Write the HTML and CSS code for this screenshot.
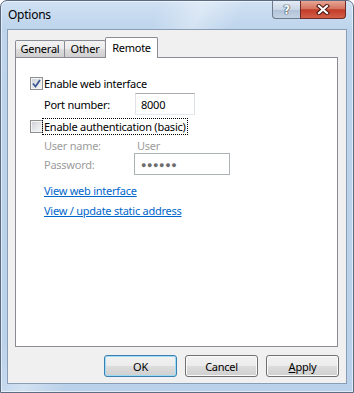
FILE: index.html
```html
<!DOCTYPE html>
<html lang="en">
<head>
  <meta charset="UTF-8" />
  <title>Options</title>
  <link rel="stylesheet" href="styles.css">
</head>
<body>
  <div class="window">
    <div class="titlebar">
      <span class="title">Options</span>
      <div class="caption-btns">
        <div class="cap help"><span>?</span></div>
        <div class="cap close">
          <svg width="14" height="11" viewBox="0 0 14 11">
            <path d="M3 2 L11 9 M11 2 L3 9" stroke="#4a1410" stroke-width="4.2" stroke-linecap="square" fill="none"/>
            <path d="M3 2 L11 9 M11 2 L3 9" stroke="#ffffff" stroke-width="2.2" stroke-linecap="square" fill="none"/>
          </svg>
        </div>
      </div>
    </div>

    <div class="client">
      <div class="tabs">
        <div class="tab general">General</div>
        <div class="tab other">Other</div>
        <div class="tab active">Remote</div>
      </div>

      <div class="panel">
        <div class="check-row">
          <span class="check">
            <svg width="9" height="9" viewBox="0 0 9 9">
              <path d="M1 4.5 L3.5 7.5 L8 1" stroke="#3e5a94" stroke-width="1.8" fill="none"/>
            </svg>
          </span>
          <span>Enable web interface</span>
        </div>
        <div class="field-row port-row">
          <span class="lbl">Port number:</span>
          <span class="textbox port-box">8000</span>
        </div>
        <div class="check-row auth-row">
          <span class="check"></span>
          <span class="focus">Enable authentication (basic)</span>
        </div>
        <div class="field-row user-row disabled">
          <span class="lbl">User name:</span>
          <span class="val">User</span>
        </div>
        <div class="field-row disabled">
          <span class="lbl">Password:</span>
          <span class="textbox pass-box">●●●●●●</span>
        </div>
        <a class="link first">View web interface</a>
        <a class="link">View / update static address</a>
      </div>

      <div class="buttons">
        <div class="btn default">OK</div>
        <div class="btn">Cancel</div>
        <div class="btn"><u>A</u>pply</div>
      </div>
    </div>
  </div>
</body>
</html>
```

FILE: styles.css
```css
body {
  margin: 0;
  font-family: "Noto Sans", "Liberation Sans", sans-serif;
  font-size: 11px;
  letter-spacing: -0.25px;
  color: #000;
}

.window {
  width: 354px;
  height: 393px;
  box-sizing: border-box;
  border: 1px solid #5b6c82;
  border-radius: 7px 7px 0 0;
  background:
    linear-gradient(115deg, rgba(255,255,255,0) 30%, rgba(255,255,255,0.35) 38%, rgba(255,255,255,0) 46%),
    linear-gradient(to bottom, #d0e1f3 0, #bdd4ec 28px, #b9d1ea 100%);
  box-shadow: inset 0 0 0 1px rgba(255,255,255,0.55);
  display: flex;
  flex-direction: column;
}

.titlebar {
  height: 28px;
  display: flex;
  align-items: flex-start;
}

.title {
  margin: 6px 0 0 7px;
  line-height: 16px;
  font-size: 12px;
}

.caption-btns {
  margin-left: auto;
  margin-right: 7px;
  display: flex;
}

.cap {
  height: 18px;
  box-sizing: border-box;
  display: flex;
  align-items: center;
  justify-content: center;
}

.help {
  width: 28px;
  border: 1px solid #6d7b8d;
  border-top: none;
  border-right: none;
  border-radius: 0 0 0 4px;
  background: linear-gradient(to bottom, #e4ecf5 0%, #c9d6e5 50%, #b1c1d6 51%, #c4d3e4 100%);
}

.help span {
  font-family: "DejaVu Sans", sans-serif;
  font-weight: bold;
  font-size: 12px;
  color: #fff;
  text-shadow: 0 0 1px #2e3a4a, 0 0 1px #2e3a4a, 0 0 1px #2e3a4a;
}

.close {
  width: 46px;
  border: 1px solid #6e2a24;
  border-top: none;
  border-radius: 0 0 4px 0;
  background: linear-gradient(to bottom, #e8a595 0%, #d47560 45%, #c13c28 52%, #d4604a 100%);
}

.client {
  flex: 1;
  margin: 0 6px 8px 6px;
  background: #f0f0f0;
  border: 1px solid #8a9db5;
  padding: 7px 8px 0 7px;
  display: flex;
  flex-direction: column;
}

.tabs {
  height: 20px;
  display: flex;
  align-items: flex-end;
}

.tab {
  box-sizing: border-box;
  height: 17px;
  line-height: 16px;
  border: 1px solid #898c95;
  border-bottom: none;
  border-radius: 2px 2px 0 0;
  background: linear-gradient(to bottom, #f2f2f2 0%, #ebebeb 50%, #dddddd 51%, #cfcfcf 100%);
  text-align: center;
}

.general {
  width: 50px;
}

.other {
  width: 42px;
  margin-left: -1px;
}

.tab.active {
  position: relative;
  width: 53px;
  height: 21px;
  line-height: 19px;
  margin-left: -1px;
  margin-bottom: -1px;
  background: #fff;
}

.panel {
  box-sizing: border-box;
  height: 290px;
  border: 1px solid #898c95;
  background: #fff;
  padding: 17px 0 0 14px;
  display: flex;
  flex-direction: column;
  align-items: flex-start;
}

.check-row {
  display: flex;
  align-items: center;
  height: 16px;
}

.check {
  width: 13px;
  height: 13px;
  box-sizing: border-box;
  margin-right: 1px;
  border: 1px solid #8e8f8f;
  background: linear-gradient(135deg, #cbcfd5 0%, #e8eaec 60%, #f6f6f6 100%);
  box-shadow: inset 0 0 0 1px #f4f4f4;
  display: flex;
  align-items: center;
  justify-content: center;
}

.field-row {
  display: flex;
  align-items: center;
  height: 22px;
  padding-left: 14px;
}

.lbl {
  width: 90px;
}

.port-row {
  margin-top: 2px;
}

.auth-row {
  margin-top: 3px;
}

.focus {
  outline: 1px dotted #000;
  outline-offset: 0;
  padding: 0 1px;
  margin-left: -1px;
}

.user-row {
  margin-top: 4px;
  height: 15px;
}

.disabled {
  color: #9c9c9c;
}

.val {
  padding-left: 3px;
}

.textbox {
  box-sizing: border-box;
  height: 22px;
  border: 1px solid;
  border-color: #abadb3 #dbdfe6 #e3e9ef #e2e3ea;
  background: #fff;
  color: #000;
  display: flex;
  align-items: center;
}

.port-box {
  width: 60px;
  margin-left: 1px;
  padding-left: 5px;
}

.pass-box {
  width: 96px;
  padding-left: 6px;
  border-color: #adb2b5;
  color: #6d6d6d;
  font-size: 9px;
  letter-spacing: 0.6px;
}

.link {
  color: #0066cc;
  text-decoration: underline;
  height: 16px;
  line-height: 16px;
  margin-top: 4px;
  margin-left: 14px;
}

.link.first {
  margin-top: 8px;
}

.buttons {
  margin-top: 8px;
  margin-right: -1px;
  display: flex;
  justify-content: flex-end;
  gap: 8px;
}

.btn {
  box-sizing: border-box;
  width: 73px;
  height: 22px;
  border: 1px solid #707070;
  border-radius: 3px;
  background: linear-gradient(to bottom, #f2f2f2 0%, #ebebeb 50%, #dddddd 51%, #cfcfcf 100%);
  box-shadow: inset 0 0 0 1px #fbfbfb;
  display: flex;
  align-items: center;
  justify-content: center;
}

.btn.default {
  border-color: #3c7fb1;
  box-shadow: inset 0 0 0 1px #9ddcf7;
}
```
